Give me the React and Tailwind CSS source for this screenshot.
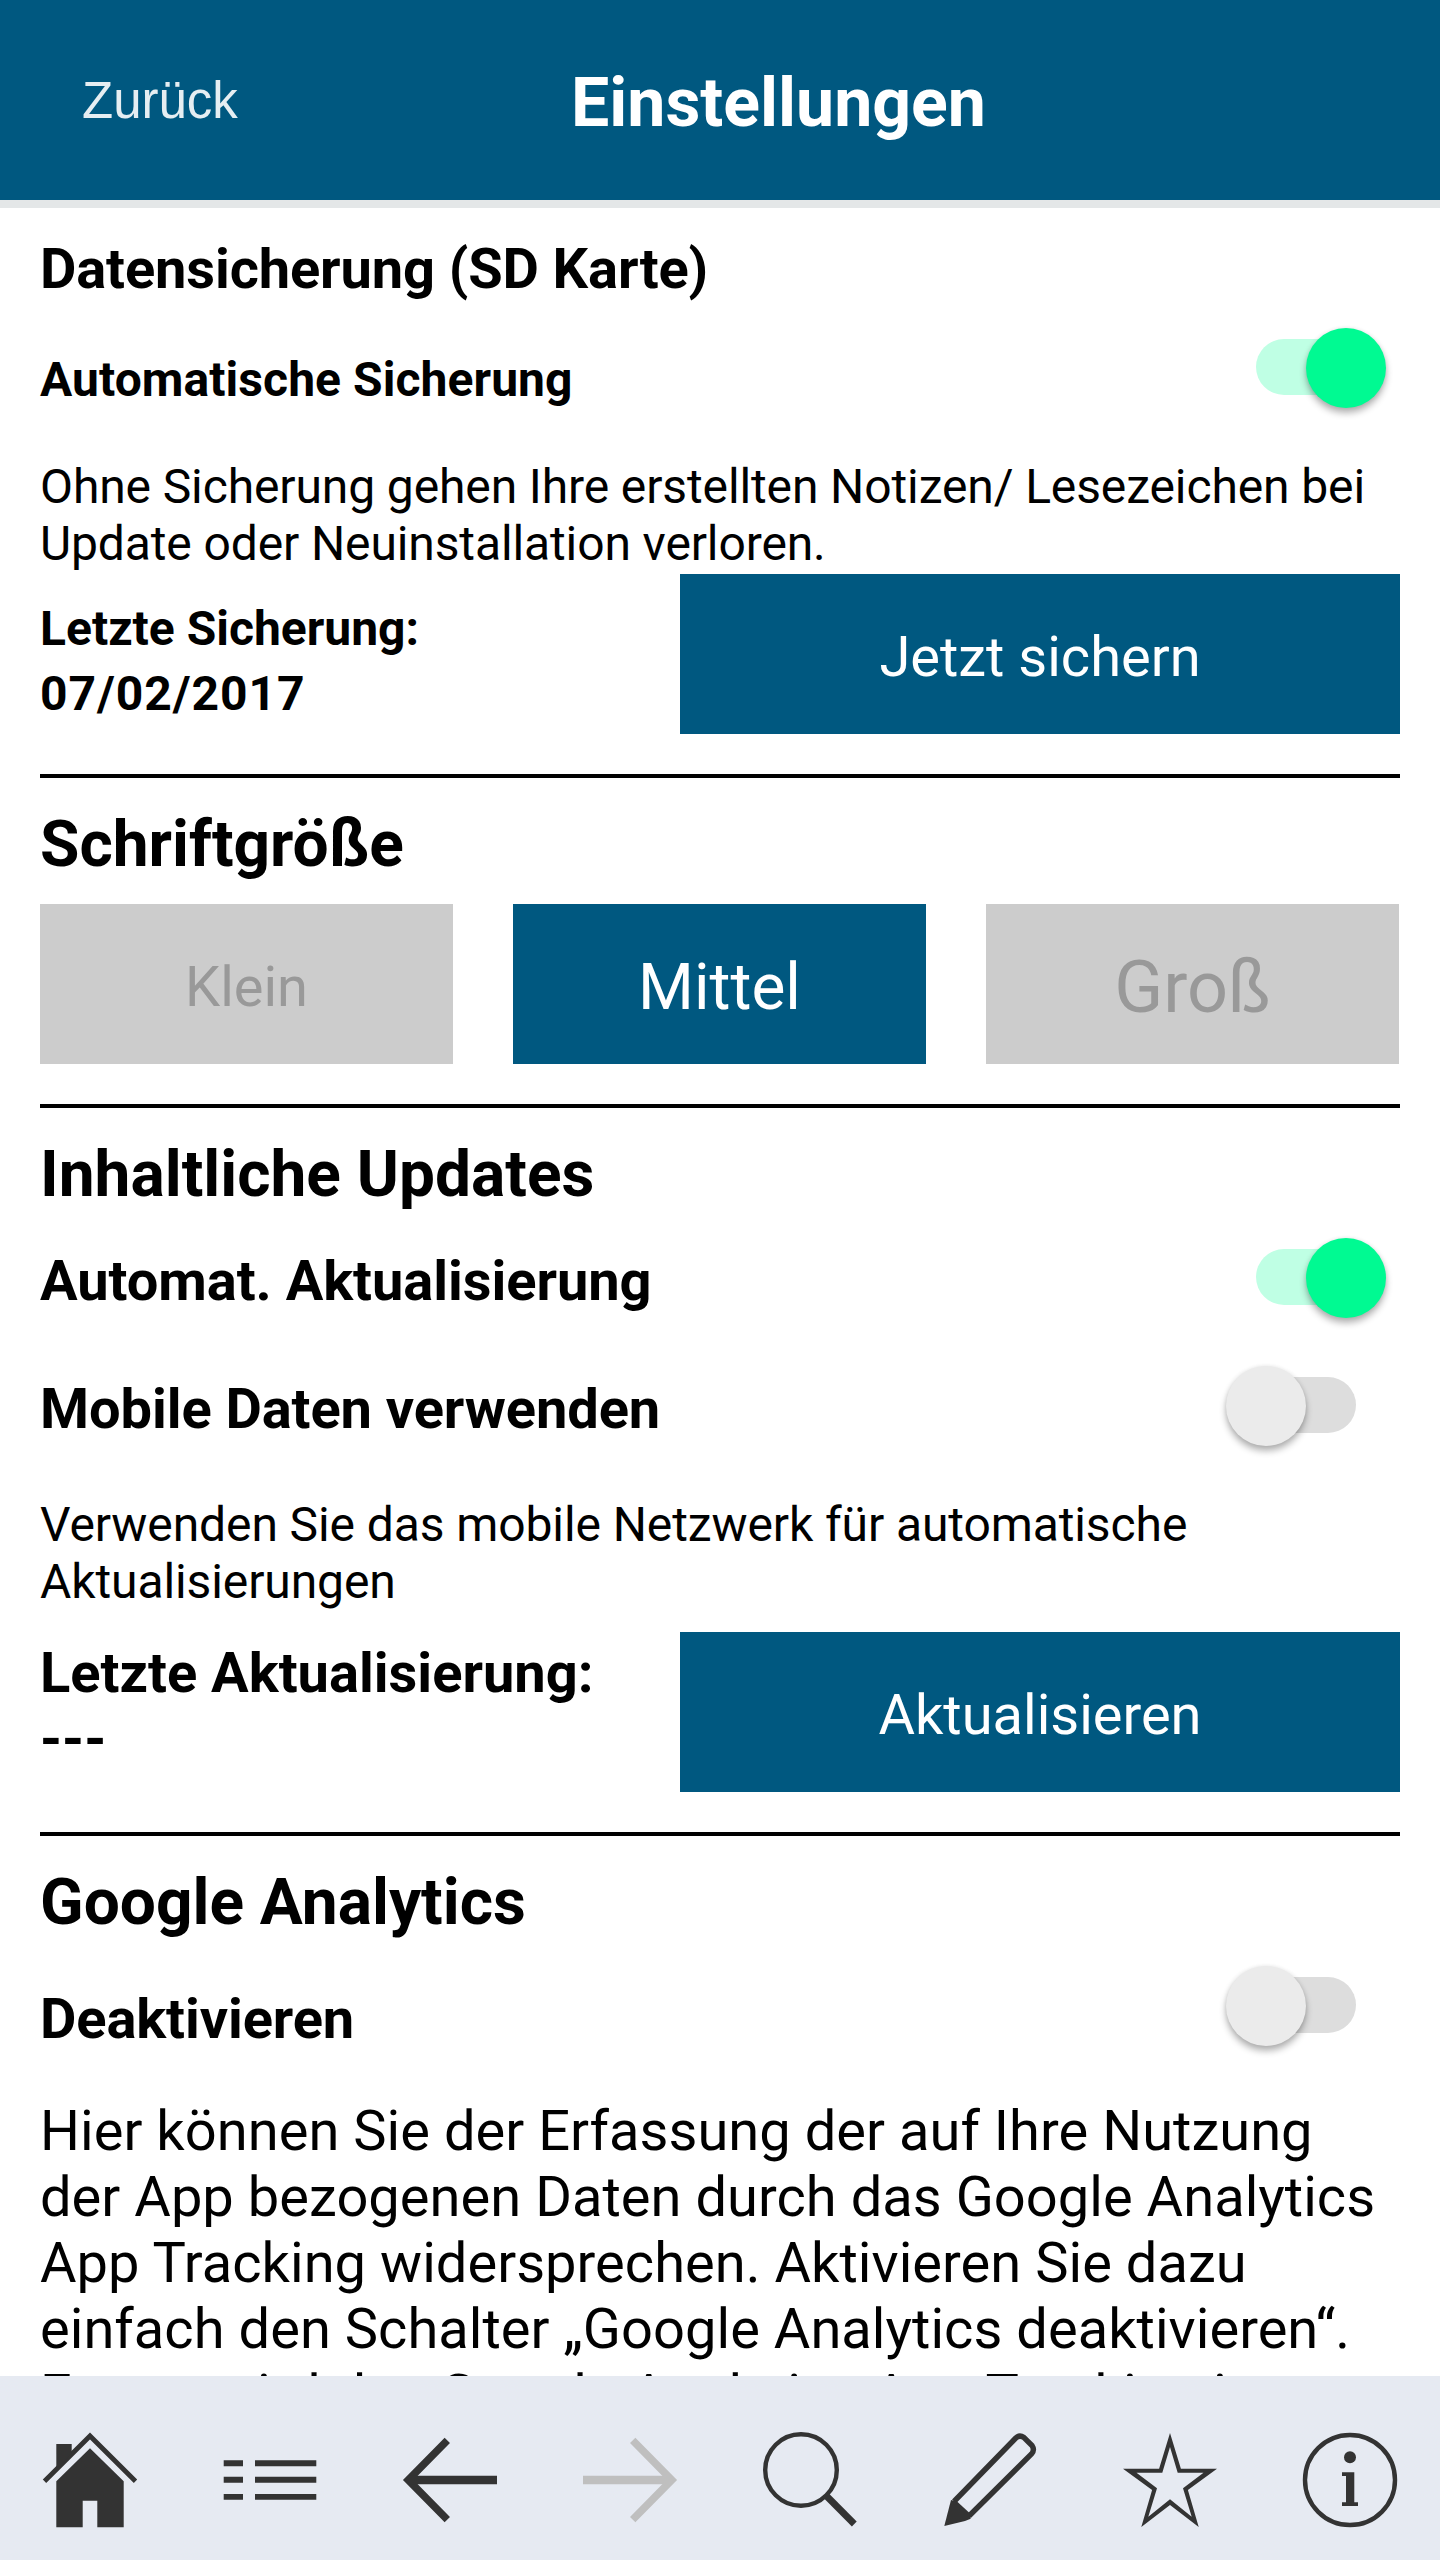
import { useState } from "react";
import clsx from "clsx";

const FONT_SIZES = [
    { id: "small", label: "Klein", className: "pt-[6px] text-[56px]" },
    { id: "medium", label: "Mittel", className: "pt-2 text-[64px]" },
    { id: "large", label: "Groß", className: "pt-2 text-[72px]" },
];

function Icon({ children, className }) {
    return (
        <svg
            viewBox="0 0 100 100"
            className={clsx("w-[100px] h-[100px]", className)}
            fill="currentColor"
            aria-hidden="true"
        >
            {children}
        </svg>
    );
}

function HomeIcon() {
    return (
        <Icon>
            <path
                d="M4.5 51.2 50 6 95.5 51.2"
                fill="none"
                stroke="currentColor"
                strokeWidth="4.8"
            />
            <path d="M16.3 14H31.7V24L16.3 39.5Z" />
            <path d="M50 18.3 83.7 51.3V97.3H57.3V70.7H42.7V97.3H16.3V51.3Z" />
        </Icon>
    );
}

function ListIcon() {
    return (
        <Icon>
            <path d="M3.7 30.3H23V36.3H3.7ZM35 30.3H96.3V36.3H35ZM3.7 46.7H23V52.7H3.7ZM35 46.7H96.3V52.7H35ZM3.7 64H23V69.7H3.7ZM35 64H96.3V69.7H35Z" />
        </Icon>
    );
}

function ArrowIcon({ className }) {
    return (
        <Icon className={className}>
            <path
                d="M47.3 10.3 8.2 50 47.3 89.7"
                fill="none"
                stroke="currentColor"
                strokeWidth="7.5"
            />
            <path d="M9 45.8H97V54.2H9Z" />
        </Icon>
    );
}

function SearchIcon() {
    return (
        <Icon>
            <g fill="none" stroke="currentColor">
                <circle cx="41" cy="40" r="35.8" strokeWidth="4.4" />
                <path d="M66 65.5 94.3 94" strokeWidth="6.8" />
            </g>
        </Icon>
    );
}

function PencilIcon() {
    return (
        <Icon>
            <path
                d="M14 71.5 75.8 8Q79.5 4.500 84 7.500L92 15.500Q95 20 91.500 24L29 86"
                fill="none"
                stroke="currentColor"
                strokeWidth="5.4"
            />
            <path d="M4.3 96 11 70 17.3 71.7 29.3 82.7 30.7 88.7 25 91Z" />
        </Icon>
    );
}

function StarIcon() {
    return (
        <Icon>
            <path
                fillRule="evenodd"
                d="M50 3 60.900 38.700H97L67.900 60 78.700 97 50 75 21.300 97 32.100 60 3 38.700H39.100ZM50 17 42.300 42.700H16.500L37 58.300 28.300 86.800 50 69.200 71.700 86.800 63 58.300 83.500 42.700H57.700Z"
            />
        </Icon>
    );
}

function InfoIcon() {
    return (
        <Icon>
            <circle
                cx="50"
                cy="50"
                r="45"
                fill="none"
                stroke="currentColor"
                strokeWidth="4.4"
            />
            <circle cx="50" cy="27.3" r="6" />
            <path d="M42 42.3H54.3V72.3H58V76H42V72.3H46V46H42Z" />
        </Icon>
    );
}

function Toggle({ checked, onChange, label }) {
    return (
        <button
            type="button"
            role="switch"
            aria-checked={checked}
            aria-label={label}
            onClick={() => onChange(!checked)}
            className="relative mr-[14px] flex h-20 w-40 shrink-0 items-center justify-center"
        >
            <span
                className={clsx(
                    "-mt-[2px] h-14 w-[100px] rounded-full",
                    checked ? "bg-[#bfffe4]" : "bg-[#dddddd]",
                )}
            />
            <span
                className={clsx(
                    "absolute top-0 size-20 rounded-full shadow-[0_5px_7px_rgba(0,0,0,0.3),0_0_4px_rgba(0,0,0,0.08)]",
                    checked ? "right-0 bg-[#00fa92]" : "left-0 bg-[#ebebeb]",
                )}
            />
        </button>
    );
}

function ActionButton({ children }) {
    return (
        <button
            type="button"
            className="h-40 w-[720px] shrink-0 bg-[#005880] pt-[6px] text-[56px] text-white"
        >
            {children}
        </button>
    );
}

function Divider() {
    return <hr className="mt-10 h-1 border-0 bg-black" />;
}

function SectionTitle({ children }) {
    return (
        <h2 className="mt-7 h-[76px] pt-px text-[64px] leading-[76px] font-bold">
            {children}
        </h2>
    );
}

export default function App() {
    const [autoBackup, setAutoBackup] = useState(true);
    const [autoUpdate, setAutoUpdate] = useState(true);
    const [mobileData, setMobileData] = useState(false);
    const [analyticsOff, setAnalyticsOff] = useState(false);
    const [fontSize, setFontSize] = useState("medium");

    return (
        <div className="flex h-[2560px] w-[1440px] flex-col overflow-hidden bg-white font-['Roboto',sans-serif] text-black">
            <header className="flex h-[208px] shrink-0 items-center border-b-8 border-[#e4e7e8] bg-[#005880] text-white">
                <button
                    type="button"
                    className="w-[489px] pt-[2px] pl-[82px] text-left font-['Liberation_Sans',sans-serif] text-[51px] text-[#e6eef2]"
                >
                    Zurück
                </button>
                <h1 className="w-[579px] pt-[6px] text-center text-[68px] font-bold">
                    Einstellungen
                </h1>
            </header>

            <main className="min-h-0 flex-1 overflow-hidden px-10">
                <section>
                    <h2 className="mt-7 text-[56px] leading-[66px] font-bold tracking-[-0.12px]">
                        Datensicherung (SD Karte)
                    </h2>
                    <div className="mt-[26px] flex h-20 items-center justify-between">
                        <h3 className="pt-[23px] text-[48px] font-bold tracking-[0.07px]">
                            Automatische Sicherung
                        </h3>
                        <Toggle
                            checked={autoBackup}
                            onChange={setAutoBackup}
                            label="Automatische Sicherung"
                        />
                    </div>
                    <p className="mt-[50px] text-[48px] leading-[57px] tracking-[-0.12px]">
                        Ohne Sicherung gehen Ihre erstellten Notizen/
                        Lesezeichen bei
                        <br />
                        Update oder Neuinstallation verloren.
                    </p>
                    <div className="mt-[2px] flex justify-between">
                        <div className="pt-[22px] text-[48px] leading-[65px] font-bold">
                            <p>Letzte Sicherung:</p>
                            <p className="tracking-[0.95px]">07/02/2017</p>
                        </div>
                        <ActionButton>Jetzt sichern</ActionButton>
                    </div>
                </section>
                <Divider />

                <section>
                    <SectionTitle>Schriftgröße</SectionTitle>
                    <div className="mt-[22px] mr-px grid grid-cols-3 gap-[60px]">
                        {FONT_SIZES.map((size) => (
                            <button
                                key={size.id}
                                type="button"
                                onClick={() => setFontSize(size.id)}
                                className={clsx(
                                    "h-40",
                                    size.className,
                                    fontSize === size.id
                                        ? "bg-[#005880] text-white"
                                        : "bg-[#cccccc] text-[#999999]",
                                )}
                            >
                                {size.label}
                            </button>
                        ))}
                    </div>
                </section>
                <Divider />

                <section>
                    <SectionTitle>Inhaltliche Updates</SectionTitle>
                    <div className="mt-[26px] flex h-20 items-center justify-between">
                        <h3 className="pt-[6px] text-[56px] font-bold tracking-[-0.05px]">
                            Automat. Aktualisierung
                        </h3>
                        <Toggle
                            checked={autoUpdate}
                            onChange={setAutoUpdate}
                            label="Automat. Aktualisierung"
                        />
                    </div>
                    <div className="mt-12 flex h-20 items-center justify-between">
                        <h3 className="pt-[6px] text-[56px] font-bold tracking-[-0.08px]">
                            Mobile Daten verwenden
                        </h3>
                        <Toggle
                            checked={mobileData}
                            onChange={setMobileData}
                            label="Mobile Daten verwenden"
                        />
                    </div>
                    <p className="mt-[50px] text-[48px] leading-[57px] tracking-[-0.1px]">
                        Verwenden Sie das mobile Netzwerk für automatische
                        <br />
                        Aktualisierungen
                    </p>
                    <div className="mt-[22px] flex justify-between">
                        <p className="pt-2 text-[56px] leading-[66px] font-bold">
                            Letzte Aktualisierung:
                            <br />
                            ---
                        </p>
                        <ActionButton>Aktualisieren</ActionButton>
                    </div>
                </section>
                <Divider />

                <section>
                    <SectionTitle>Google Analytics</SectionTitle>
                    <div className="mt-[26px] flex h-20 items-center justify-between">
                        <h3 className="pt-[26px] text-[56px] font-bold tracking-[-0.1px]">
                            Deaktivieren
                        </h3>
                        <Toggle
                            checked={analyticsOff}
                            onChange={setAnalyticsOff}
                            label="Google Analytics deaktivieren"
                        />
                    </div>
                    <p className="mt-[52px] text-[56px] leading-[66px] tracking-[0.04px] whitespace-nowrap">
                        Hier können Sie der Erfassung der auf Ihre Nutzung
                        <br />
                        der App bezogenen Daten durch das Google Analytics
                        <br />
                        App Tracking widersprechen. Aktivieren Sie dazu
                        <br />
                        einfach den Schalter „Google Analytics deaktivieren“.
                        <br />
                        Erneut wird das Google Analytics App Tracking in
                    </p>
                </section>
            </main>

            <nav className="grid h-[184px] shrink-0 grid-cols-8 bg-[#e6eaf2] pt-[54px] text-[#333333]">
                <button type="button" aria-label="Start" className="flex justify-center">
                    <HomeIcon />
                </button>
                <button type="button" aria-label="Inhalt" className="flex justify-center">
                    <ListIcon />
                </button>
                <button type="button" aria-label="Zurück" className="flex justify-center">
                    <ArrowIcon />
                </button>
                <button type="button" aria-label="Vor" className="flex justify-center">
                    <ArrowIcon className="-scale-x-100 text-[#bfbfbf]" />
                </button>
                <button type="button" aria-label="Suche" className="flex justify-center">
                    <SearchIcon />
                </button>
                <button type="button" aria-label="Notizen" className="flex justify-center">
                    <PencilIcon />
                </button>
                <button type="button" aria-label="Lesezeichen" className="flex justify-center">
                    <StarIcon />
                </button>
                <button type="button" aria-label="Info" className="flex justify-center">
                    <InfoIcon />
                </button>
            </nav>
        </div>
    );
}
